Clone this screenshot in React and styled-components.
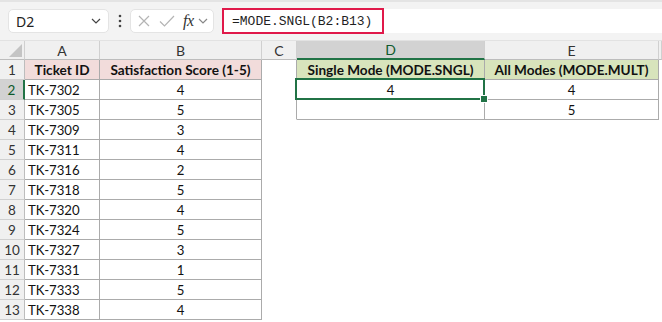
import React from 'react'
import styled, { createGlobalStyle } from 'styled-components'

const GlobalStyle = createGlobalStyle`
  html, body {
    margin: 0;
    padding: 0;
    background: #ffffff;
    overflow: hidden;
  }
`

const GREEN = '#217346'
const LINE = '#ababab'

const Page = styled.div`
  width: 662px;
  height: 322px;
  background: #fff;
  font-family: Lato, 'Liberation Sans', sans-serif;
`

const TopBar = styled.div`
  box-sizing: border-box;
  height: 41px;
  display: flex;
  align-items: center;
  padding-left: 8px;
  background: #f3f3f3;
  border-top: 2px solid #e4e4e4;
  border-bottom: 1px solid #e2e2e2;
`

const NameBox = styled.div`
  box-sizing: border-box;
  width: 101px;
  height: 24px;
  background: #fff;
  border: 1px solid #e4e4e4;
  border-radius: 5px;
  display: flex;
  align-items: center;
  justify-content: space-between;
  padding: 0 7px 0 7px;
  font-family: 'Noto Sans', 'Open Sans', sans-serif;
  font-size: 14px;
  color: #222;
`

const Dots = styled.div`
  width: 21px;
  display: flex;
  justify-content: center;
`

const FxBox = styled.div`
  box-sizing: border-box;
  width: 84px;
  height: 24px;
  background: #fff;
  border: 1px solid #e4e4e4;
  border-radius: 5px;
  display: flex;
  align-items: center;
  padding-left: 7px;
  gap: 9px;
`

const FxGroup = styled.span`
  display: flex;
  align-items: center;
  gap: 4px;
`

const FxText = styled.span`
  font-family: 'Liberation Serif', serif;
  font-style: italic;
  font-size: 16px;
  color: #333;
  margin-left: -1px;
  letter-spacing: -0.5px;
`

const FormulaBar = styled.div`
  flex: 1;
  height: 24px;
  margin-left: 8px;
  background: #fff;
  display: flex;
  align-items: center;
`

const FormulaHighlight = styled.div`
  box-sizing: border-box;
  width: 162px;
  height: 26px;
  border: 2px solid #e0194a;
  display: flex;
  align-items: center;
  padding-left: 8px;
  font-family: 'Liberation Mono', monospace;
  font-size: 13px;
  color: #1f1f1f;
`

const Sheet = styled.div`
  display: grid;
  grid-template-columns: 25px 75px 162px 35px 188px 174px 1fr;
  grid-auto-rows: 20px;
  grid-template-rows: 19px;
`

const Corner = styled.div`
  box-sizing: border-box;
  background: #f0f0f0;
  border-right: 1px solid #d0d0d0;
  border-bottom: 1px solid #bdbdbd;
  position: relative;
  overflow: hidden;
  &::after {
    content: '';
    position: absolute;
    right: 2px;
    bottom: 2px;
    border-left: 13px solid transparent;
    border-bottom: 13px solid #c4c4c4;
  }
`

const ColHeader = styled.div`
  box-sizing: border-box;
  background: ${p => (p.$active ? '#d2d2d2' : '#f0f0f0')};
  border-right: 1px solid #d0d0d0;
  border-bottom: ${p => (p.$active ? `2px solid ${GREEN}` : '1px solid #bdbdbd')};
  display: flex;
  align-items: center;
  justify-content: center;
  font-size: 14px;
  color: ${p => (p.$active ? '#0e5a2c' : '#333')};
`

const RowHeader = styled.div`
  box-sizing: border-box;
  background: ${p => (p.$active ? '#d2d2d2' : '#f0f0f0')};
  border-right: ${p => (p.$active ? `2px solid ${GREEN}` : '1px solid #bdbdbd')};
  border-bottom: 1px solid #d0d0d0;
  display: flex;
  align-items: center;
  justify-content: center;
  font-size: 13.5px;
  color: ${p => (p.$active ? '#0e5a2c' : '#333')};
`

const Cell = styled.div`
  box-sizing: border-box;
  position: relative;
  background: ${p => p.$bg || '#fff'};
  border-right: 1px solid ${p => (p.$r ? LINE : 'transparent')};
  border-bottom: 1px solid ${p => (p.$b ? LINE : 'transparent')};
  display: flex;
  align-items: center;
  justify-content: ${p => (p.$left ? 'flex-start' : 'center')};
  padding-left: ${p => (p.$left ? '3px' : '0')};
  font-size: ${p => (p.$bold ? '13.6px' : '13.2px')};
  font-weight: ${p => (p.$bold ? 700 : 400)};
  color: #111;
  white-space: nowrap;
  z-index: ${p => (p.$selected ? 2 : 0)};
`

const Selection = styled.div`
  position: absolute;
  top: -2px;
  left: -2px;
  right: -1px;
  bottom: -1px;
  border: 2px solid ${GREEN};
  pointer-events: none;
`

const FillHandle = styled.div`
  position: absolute;
  right: -5px;
  bottom: -5px;
  width: 6px;
  height: 6px;
  background: ${GREEN};
  border: 1px solid #fff;
`

const Chevron = ({ color = '#555' }) => (
  <svg width="10" height="6" viewBox="0 0 10 6">
    <path d="M1 1l4 4 4-4" fill="none" stroke={color} strokeWidth="1.2" />
  </svg>
)

const tickets = [
  ['TK-7302', 4],
  ['TK-7305', 5],
  ['TK-7309', 3],
  ['TK-7311', 4],
  ['TK-7316', 2],
  ['TK-7318', 5],
  ['TK-7320', 4],
  ['TK-7324', 5],
  ['TK-7327', 3],
  ['TK-7331', 1],
  ['TK-7333', 5],
  ['TK-7338', 4],
]

const PINK = '#f2dcdb'
const LIME = '#d8e4bc'

const modes = { 2: ['4', '4'], 3: ['', '5'] }

export default function App() {
  const rows = []
  for (let r = 1; r <= 13; r++) {
    const isHead = r === 1
    const t = tickets[r - 2]
    const dVals = modes[r]
    rows.push(
      <React.Fragment key={r}>
        <RowHeader $active={r === 2}>{r}</RowHeader>
        <Cell $r $b $left={!isHead} $bold={isHead} $bg={isHead ? PINK : undefined}>
          {isHead ? 'Ticket ID' : t[0]}
        </Cell>
        <Cell $r $b $bold={isHead} $bg={isHead ? PINK : undefined}>
          {isHead ? 'Satisfaction Score (1-5)' : t[1]}
        </Cell>
        <Cell $r={r <= 3} />
        {r <= 3 ? (
          <>
            <Cell $r $b $bold={isHead} $bg={isHead ? LIME : undefined} $selected={r === 2}>
              {isHead ? 'Single Mode (MODE.SNGL)' : dVals[0]}
              {r === 2 && (
                <Selection>
                  <FillHandle />
                </Selection>
              )}
            </Cell>
            <Cell $r $b $bold={isHead} $bg={isHead ? LIME : undefined}>
              {isHead ? 'All Modes (MODE.MULT)' : dVals[1]}
            </Cell>
          </>
        ) : (
          <>
            <Cell />
            <Cell />
          </>
        )}
        <Cell />
      </React.Fragment>
    )
  }

  return (
    <Page>
      <GlobalStyle />
      <TopBar>
        <NameBox>
          <span>D2</span>
          <Chevron color="#444" />
        </NameBox>
        <Dots>
          <svg width="4" height="14" viewBox="0 0 4 14">
            <circle cx="2" cy="2" r="1.3" fill="#444" />
            <circle cx="2" cy="7" r="1.3" fill="#444" />
            <circle cx="2" cy="12" r="1.3" fill="#444" />
          </svg>
        </Dots>
        <FxBox>
          <svg width="12" height="12" viewBox="0 0 12 12">
            <path d="M1 1l10 10M11 1L1 11" stroke="#b4b4b4" strokeWidth="1.2" />
          </svg>
          <svg width="16" height="12" viewBox="0 0 16 12">
            <path d="M1 6.5l4.5 4.5L15 1" fill="none" stroke="#b4b4b4" strokeWidth="1.2" />
          </svg>
          <FxGroup>
            <FxText>fx</FxText>
            <Chevron color="#888" />
          </FxGroup>
        </FxBox>
        <FormulaBar>
          <FormulaHighlight>=MODE.SNGL(B2:B13)</FormulaHighlight>
        </FormulaBar>
      </TopBar>
      <Sheet>
        <Corner />
        <ColHeader>A</ColHeader>
        <ColHeader>B</ColHeader>
        <ColHeader>C</ColHeader>
        <ColHeader $active>D</ColHeader>
        <ColHeader>E</ColHeader>
        <ColHeader />
        {rows}
      </Sheet>
    </Page>
  )
}
